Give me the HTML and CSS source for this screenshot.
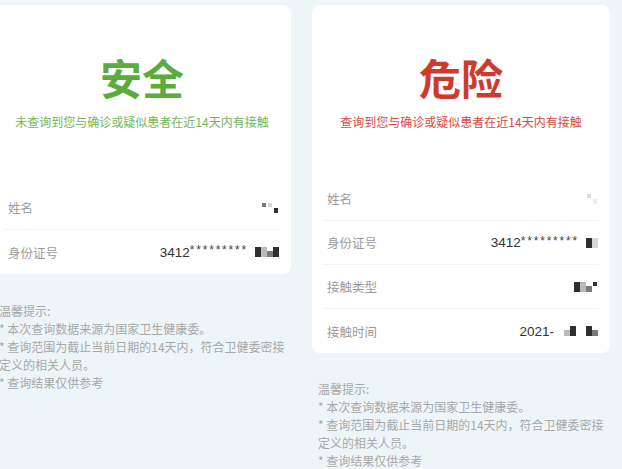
FILE: index.html
```html
<!DOCTYPE html>
<html lang="zh-CN">
<head>
  <meta charset="UTF-8">
  <meta name="viewport" content="width=device-width, initial-scale=1.0">
  <title>密接查询结果</title>
  <link rel="stylesheet" href="styles.css">
</head>
<body>
  <div class="page">
    <!-- 安全 -->
    <div class="panel panel-left">
      <div class="card">
        <div class="status safe">安全</div>
        <div class="statusText safe">未查询到您与确诊或疑似患者在近14天内有接触</div>
        <div class="rows rows-safe">
          <div class="row">
            <span class="label">姓名</span>
            <span class="value"><span class="mosaic"><i class="m2 sq"></i><i class="m4 sq"></i><i class="m1 sq low"></i></span></span>
          </div>
          <div class="row">
            <span class="label">身份证号</span>
            <span class="value">3412<span class="stars">*********</span><span class="mosaic"><i class="m1"></i><i class="m3"></i><i class="m2 low"></i><i class="m1"></i></span></span>
          </div>
        </div>
      </div>
      <div class="tips">
        <div>温馨提示:</div>
        <div>* 本次查询数据来源为国家卫生健康委。</div>
        <div>* 查询范围为截止当前日期的14天内，符合卫健委密接定义的相关人员。</div>
        <div>* 查询结果仅供参考</div>
      </div>
    </div>

    <!-- 危险 -->
    <div class="panel panel-right">
      <div class="card">
        <div class="status danger">危险</div>
        <div class="statusText danger">查询到您与确诊或疑似患者在近14天内有接触</div>
        <div class="rows rows-danger">
          <div class="row">
            <span class="label">姓名</span>
            <span class="value"><span class="mosaic faint"><i class="m3 sq"></i><i class="m4 sq low"></i></span></span>
          </div>
          <div class="row">
            <span class="label">身份证号</span>
            <span class="value">3412<span class="stars">*********</span><span class="mosaic"><i class="m1"></i><i class="m4"></i></span></span>
          </div>
          <div class="row">
            <span class="label">接触类型</span>
            <span class="value"><span class="mosaic"><i class="m1"></i><i class="m3"></i><i class="m2 low"></i><i class="m1 sq"></i></span></span>
          </div>
          <div class="row">
            <span class="label">接触时间</span>
            <span class="value">2021-<span class="mosaic gap"><i class="m3 low"></i><i class="m1"></i></span><span class="mosaic gap"><i class="m1"></i><i class="m2 low"></i></span></span>
          </div>
        </div>
      </div>
      <div class="tips">
        <div>温馨提示:</div>
        <div>* 本次查询数据来源为国家卫生健康委。</div>
        <div>* 查询范围为截止当前日期的14天内，符合卫健委密接定义的相关人员。</div>
        <div>* 查询结果仅供参考</div>
      </div>
    </div>
  </div>
</body>
</html>
```

FILE: styles.css
```css
body { margin: 0; background: #eef5f8; font-family: "Noto Sans CJK SC", "Noto Sans", sans-serif; overflow: hidden; }
.page { display: flex; width: 622px; height: 469px; }

.panel { box-sizing: border-box; padding-top: 5px; }
.panel-left { width: 312px; margin-left: -7px; }
.panel-right { width: 317px; padding-left: 7px; }

.card { width: 298px; background: #fff; border-radius: 8px; padding-top: 51px; }

.status { text-align: center; font-size: 42px; line-height: 42px; font-weight: 700; }
.statusText { text-align: center; font-size: 12px; line-height: 16px; margin-top: 16px; }
.safe { color: #5aac3d; }
.statusText.safe { color: #72b656; }
.danger { color: #cf3a2f; }
.statusText.danger { color: #d44a41; }

.rows { margin: 0 11px; }
.rows-safe { margin-top: 56px; }
.rows-danger { margin-top: 47px; }
.row { display: flex; align-items: center; justify-content: space-between; height: 44px; box-sizing: border-box; padding: 0 1px 0 4px; border-bottom: 1px solid #f1f3f4; }
.row:last-child { border-bottom: none; }
.label { font-size: 12.5px; color: #9b9b9b; }
.value { display: flex; align-items: center; font-family: "Liberation Sans", Arial, sans-serif; font-size: 13.5px; color: #333; }
.stars { font-size: 12px; letter-spacing: 1.8px; color: #444; position: relative; top: -2px; }

.mosaic { display: inline-flex; align-items: flex-start; height: 10px; margin-left: 7px; }
.mosaic.gap { margin-left: 10px; }
.mosaic i { display: block; width: 6px; height: 10px; }
.mosaic i.sq { width: 4px; height: 4px; margin: 0 1px; }
.mosaic i.sq.low { margin-top: 5px; height: 5px; }
.mosaic i.low { margin-top: 4px; height: 6px; }
.mosaic.faint { opacity: 0.5; }
.m1 { background: #2f2f2f; }
.m2 { background: #7a7a7a; }
.m3 { background: #b9b9b9; }
.m4 { background: #d8d8d8; }

.tips { padding-left: 6px; width: 288px; margin-top: 28px; font-size: 12px; line-height: 18px; color: #a8a8a8; }
.panel-right .tips { margin-top: 27px; }
```
